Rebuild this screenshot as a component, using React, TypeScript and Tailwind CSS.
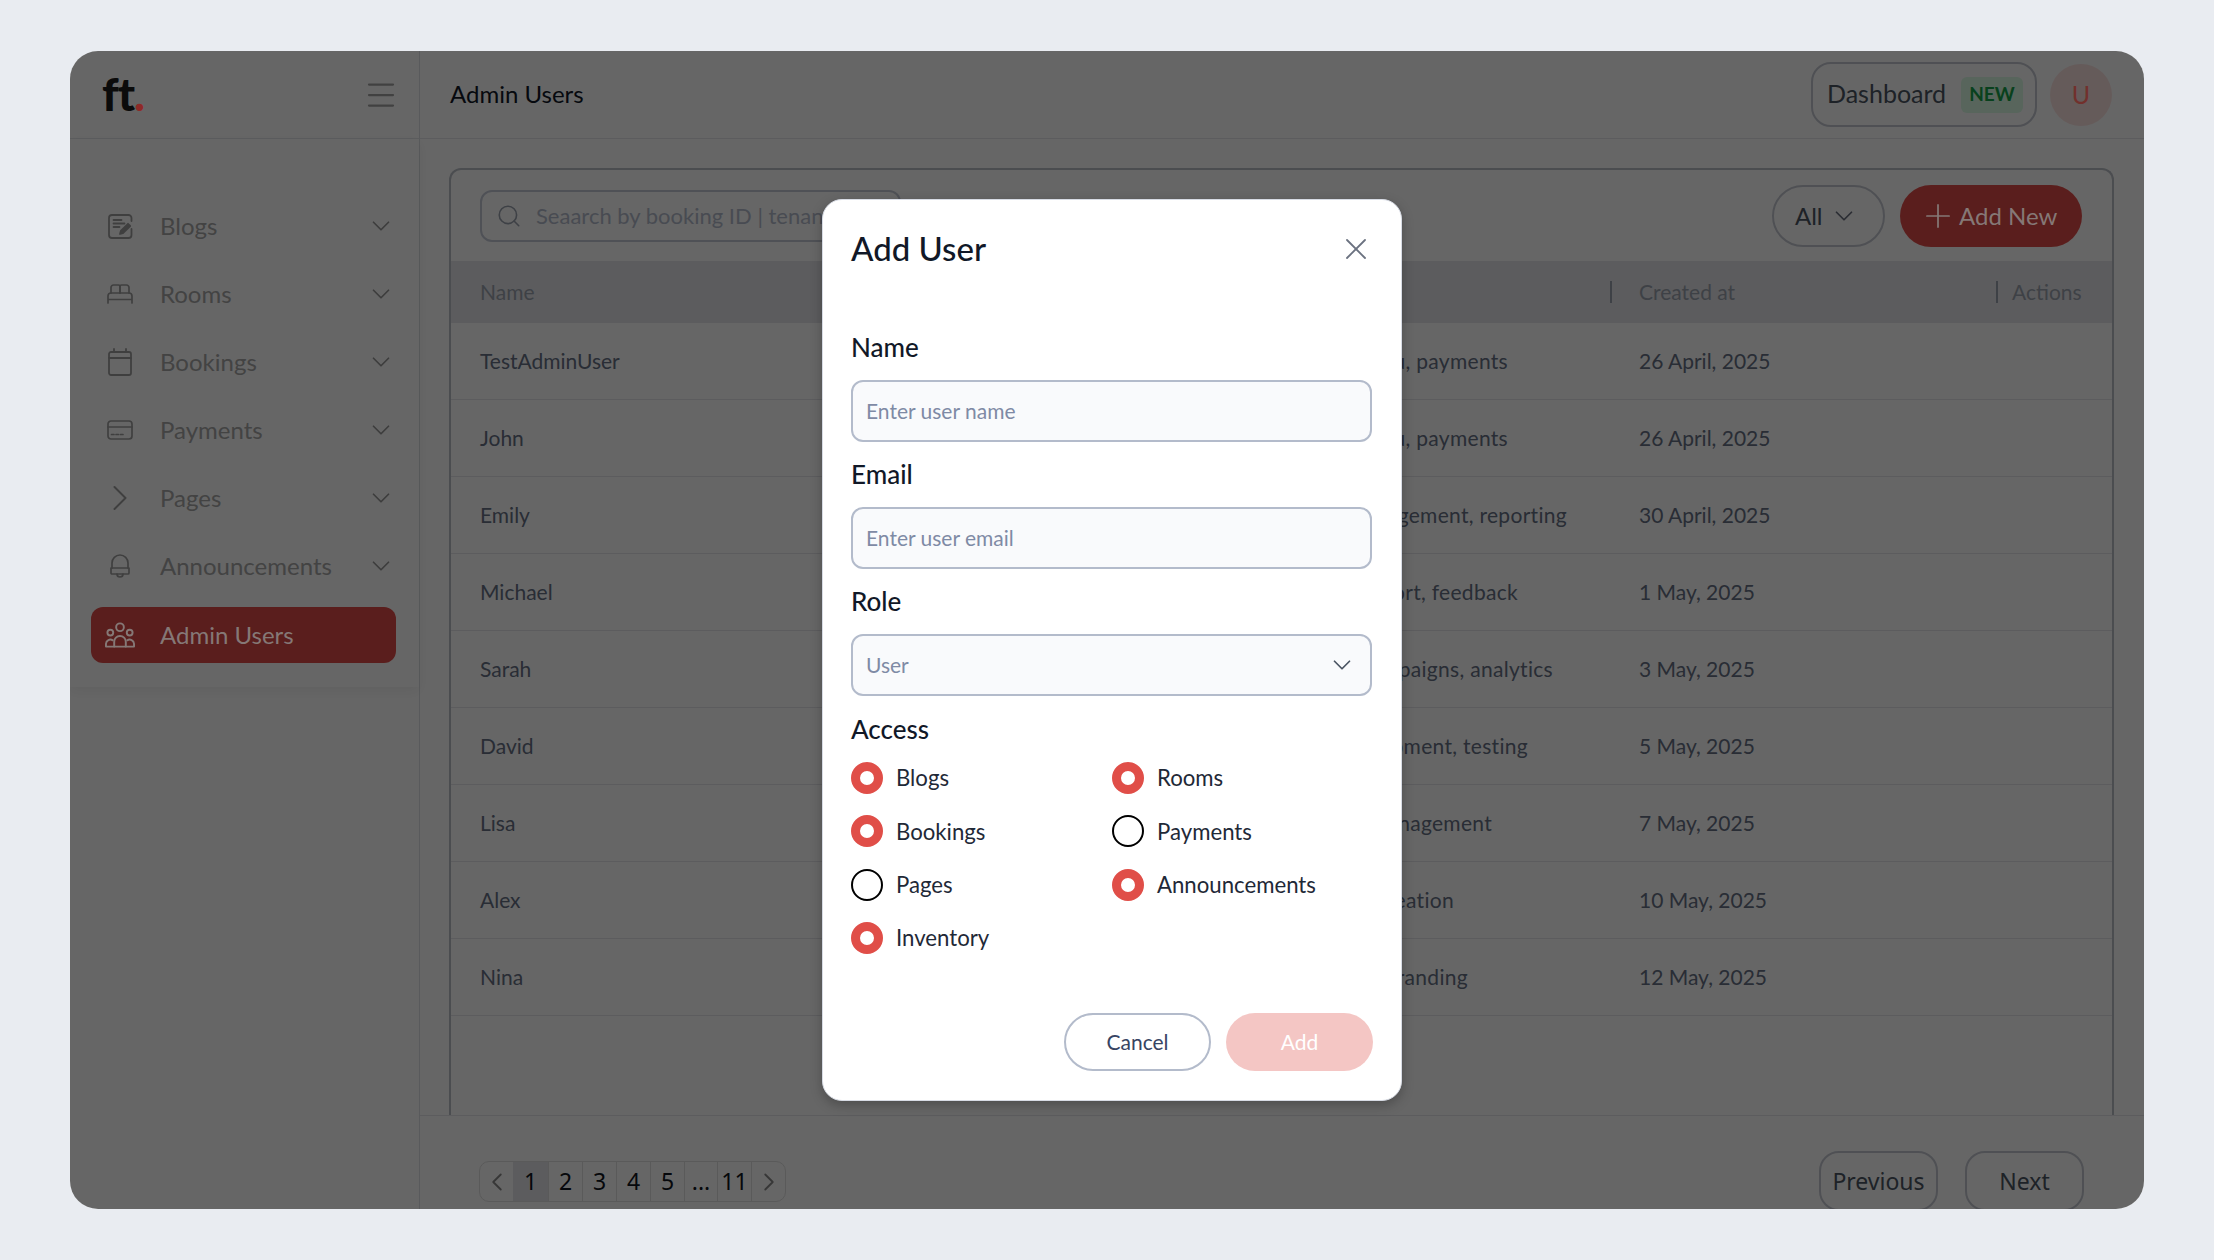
import { ChevronDown, ChevronLeft, ChevronRight, Menu, Plus, Search, X } from 'lucide-react';

const FONT = "font-['Lato','Liberation_Sans',sans-serif]";
const PAGER_FONT = "font-['Noto_Sans','Liberation_Sans',sans-serif]";

function BlogIcon() {
  return (
    <svg viewBox="0 0 25 25" className="w-[25px] h-[25px]" fill="none" stroke="currentColor" strokeWidth="1.8" strokeLinecap="round" strokeLinejoin="round">
      <path d="M23.500 7V4a3 3 0 0 0-3-3H4a3 3 0 0 0-3 3v17a3 3 0 0 0 3 3h16.500a3 3 0 0 0 3-3v-6" />
      <path d="M5.500 6h8M5.500 9.500h11M5.500 13h6" />
      <path d="M12 20l.8-3L20 9.800l2.200 2.200L15 19.200z" fill="currentColor" />
    </svg>
  );
}

function BedIcon() {
  return (
    <svg viewBox="0 0 26 20" className="w-[26px] h-[20px]" fill="none" stroke="currentColor" strokeWidth="1.7" strokeLinecap="round" strokeLinejoin="round">
      <path d="M4 9V3.500A2.500 2.500 0 0 1 6.500 1h5A1.500 1.500 0 0 1 13 2.500V9" />
      <path d="M13 9V2.500A1.500 1.500 0 0 1 14.500 1h5A2.500 2.500 0 0 1 22 3.500V9" />
      <path d="M1 19v-7a3 3 0 0 1 3-3h18a3 3 0 0 1 3 3v7M1 15.500h24" />
    </svg>
  );
}

function CalendarIcon() {
  return (
    <svg viewBox="0 0 24 28" className="w-[24px] h-[28px]" fill="none" stroke="currentColor" strokeWidth="1.8" strokeLinecap="round" strokeLinejoin="round">
      <rect x="1" y="4" width="22" height="23" rx="2" />
      <path d="M1 10h22M6 1v3M18 1v3" />
    </svg>
  );
}

function CardIcon() {
  return (
    <svg viewBox="0 0 26 20" className="w-[26px] h-[20px]" fill="none" stroke="currentColor" strokeWidth="1.7" strokeLinecap="round" strokeLinejoin="round">
      <rect x="1" y="1" width="24" height="18" rx="3" />
      <path d="M1 7h24M4.500 14.500h2.500M9 14.500h2.500M13.500 14.500h2.500" />
    </svg>
  );
}

function BellIcon() {
  return (
    <svg viewBox="0 0 22 25" className="w-[22px] h-[25px]" fill="none" stroke="currentColor" strokeWidth="1.7" strokeLinecap="round" strokeLinejoin="round">
      <path d="M3 14V9a8 8 0 0 1 16 0v5" />
      <path d="M2 14h18v5a1 1 0 0 1-1 1H3a1 1 0 0 1-1-1z" />
      <path d="M8 20a3 3 0 0 0 6 0" />
    </svg>
  );
}

function TeamIcon() {
  return (
    <svg viewBox="0 0 31 26" className="w-[31px] h-[26px]" fill="none" stroke="currentColor" strokeWidth="2" strokeLinecap="round" strokeLinejoin="round">
      <circle cx="15.500" cy="5" r="4" />
      <circle cx="5.500" cy="10.500" r="3" />
      <circle cx="25.500" cy="10.500" r="3" />
      <path d="M9.500 25v-5a6 6 0 0 1 12 0v5" />
      <path d="M1 25v-3a4.500 4.500 0 0 1 7-3.500M30 25v-3a4.500 4.500 0 0 0-7-3.500M1 25h29" />
    </svg>
  );
}

const navItems = [
  { label: 'Blogs', icon: <BlogIcon /> },
  { label: 'Rooms', icon: <BedIcon /> },
  { label: 'Bookings', icon: <CalendarIcon /> },
  { label: 'Payments', icon: <CardIcon /> },
  { label: 'Pages', icon: <ChevronRight className="w-[44px] h-[44px] shrink-0" strokeWidth={1.1} /> },
  { label: 'Announcements', icon: <BellIcon /> },
];

const rows = [
  { name: 'TestAdminUser', access: 'Blogs, menu, payments', pad: 'pr-[102px]', date: '26 April, 2025' },
  { name: 'John', access: 'Blogs, menu, payments', pad: 'pr-[102px]', date: '26 April, 2025' },
  { name: 'Emily', access: 'Content management, reporting', pad: 'pr-[43px]', date: '30 April, 2025' },
  { name: 'Michael', access: 'Customer support, feedback', pad: 'pr-[92px]', date: '1 May, 2025' },
  { name: 'Sarah', access: 'Marketing campaigns, analytics', pad: 'pr-[57px]', date: '3 May, 2025' },
  { name: 'David', access: 'Product development, testing', pad: 'pr-[82px]', date: '5 May, 2025' },
  { name: 'Lisa', access: 'Project management', pad: 'pr-[118px]', date: '7 May, 2025' },
  { name: 'Alex', access: 'Graphics, content creation', pad: 'pr-[156px]', date: '10 May, 2025' },
  { name: 'Nina', access: 'Design systems, branding', pad: 'pr-[142px]', date: '12 May, 2025' },
];

const access = [
  { label: 'Blogs', on: true },
  { label: 'Rooms', on: true },
  { label: 'Bookings', on: true },
  { label: 'Payments', on: false },
  { label: 'Pages', on: false },
  { label: 'Announcements', on: true },
  { label: 'Inventory', on: true },
];

const pages = [
  { label: '1', width: 'w-[36px] bg-[#e5e7eb]' },
  { label: '2', width: 'w-[34px]' },
  { label: '3', width: 'w-[34px]' },
  { label: '4', width: 'w-[34px]' },
  { label: '5', width: 'w-[34px]' },
  { label: '...', width: 'w-[33px]' },
  { label: '11', width: 'w-[34px]' },
];

function Sidebar() {
  return (
    <aside className="w-[350px] shrink-0 flex flex-col border-r border-[#dfe2e6]">
      <div className="h-[88px] shrink-0 flex items-center justify-between border-b border-[#e5e7eb] pl-[32px] pr-[20px]">
        <span className="text-[46px] font-black leading-none tracking-[-1px] text-[#1c1c1c] -mt-[2px]">
          ft<span className="relative z-10 text-[#8e2a28]">.</span>
        </span>
        <Menu className="w-[36px] h-[36px] text-[#a3a3a3]" strokeWidth={1.5} />
      </div>
      <nav className="flex flex-col gap-[12px] pt-[59px] pb-[24px] pl-[21px] pr-[23px] shadow-[0_4px_12px_rgba(0,0,0,0.06)]">
        {navItems.map((item) => (
          <div key={item.label} className="h-[56px] flex items-center pl-[14px] pr-0 text-[#a8a8a8]">
            <span className="w-[30px] flex justify-center text-[#9f9f9f]">{item.icon}</span>
            <span className="ml-[25px] flex-1 text-[24px]">{item.label}</span>
            <ChevronDown className="w-[30px] h-[30px] text-[#999999]" strokeWidth={1.4} />
          </div>
        ))}
        <div className="h-[56px] mt-[1px] flex items-center pl-[14px] rounded-[12px] bg-[#e14d49]">
          <span className="relative z-10 w-[30px] flex justify-center text-[#857876]"><TeamIcon /></span>
          <span className="relative z-10 ml-[25px] text-[24px] text-[#857876]">Admin Users</span>
        </div>
      </nav>
    </aside>
  );
}

function Topbar() {
  return (
    <header className="h-[88px] shrink-0 flex items-center justify-between border-b border-[#e5e7eb] pl-[30px] pr-[32px]">
      <h1 className="text-[24px] text-[#111827] -mt-[1px]">Admin Users</h1>
      <div className="flex items-center gap-[13px]">
        <div className="h-[65px] w-[226px] flex items-center justify-between rounded-[20px] border-2 border-[#c5c9d2] pl-[14px] pr-[12px]">
          <span className="text-[25px] text-[#4b5563] -mt-[1px]">Dashboard</span>
          <span className="h-[36px] w-[62px] flex items-center justify-center rounded-[6px] bg-[#dcfce7] text-[19px] font-bold text-[#16a34a]">NEW</span>
        </div>
        <div className="w-[62px] h-[62px] rounded-full bg-[#fde4e2] flex items-center justify-center text-[25px]">
          <span className="relative z-10 text-[#72302c]">U</span>
        </div>
      </div>
    </header>
  );
}

function UserTable() {
  return (
    <section className="flex-1 ml-[29px] mr-[30px] mt-[29px] border-2 border-b-0 border-[#bcc0c8] rounded-t-[12px] flex flex-col">
      <div className="h-[91px] shrink-0 flex items-center justify-between pl-[29px] pr-[30px]">
        <div className="w-[421px] h-[52px] flex items-center gap-[14px] rounded-[12px] border-2 border-[#c5cad8] pl-[14px]">
          <Search className="w-[26px] h-[26px] text-[#9ca3af]" strokeWidth={1.5} />
          <span className="text-[22px] text-[#b5bccd] whitespace-nowrap -mt-[1px]">Seaarch by booking ID | tenant</span>
        </div>
        <div className="flex items-center gap-[15px]">
          <div className="w-[113px] h-[62px] flex items-center gap-[6px] rounded-full border-2 border-[#c5c9d2] pl-[21px] text-[24px] text-[#4b5563]">
            All
            <ChevronDown className="w-[30px] h-[30px] text-[#6b7280]" strokeWidth={1.4} />
          </div>
          <div className="w-[182px] h-[62px] flex items-center gap-[2px] rounded-full bg-[#e14d49] pl-[19px]">
            <Plus className="relative z-10 w-[38px] h-[38px] text-[#857876]" strokeWidth={1.1} />
            <span className="relative z-10 text-[24px] text-[#857876]">Add New</span>
          </div>
        </div>
      </div>
      <div className="h-[62px] shrink-0 grid grid-cols-[750px_409px_386px_1fr] items-center bg-[#e5e7eb] text-[21px] text-[#9ca3af]">
        <div className="pl-[29px]">Name</div>
        <div />
        <div className="flex items-center gap-[27px]"><span className="w-[2px] h-[22px] bg-[#9ca3af]" />Created at</div>
        <div className="flex items-center gap-[14px]"><span className="w-[2px] h-[22px] bg-[#9ca3af]" />Actions</div>
      </div>
      {rows.map((row) => (
        <div key={row.name} className="h-[77px] shrink-0 grid grid-cols-[750px_409px_386px_1fr] items-center border-b border-[#e5e7eb] text-[21px] text-[#667085]">
          <div className="pl-[29px]">{row.name}</div>
          <div className={`text-right whitespace-nowrap tracking-[0.3px] ${row.pad}`}>{row.access}</div>
          <div className="pl-[29px]">{row.date}</div>
          <div />
        </div>
      ))}
    </section>
  );
}

function Pagination() {
  return (
    <div className={`flex h-[41px] mt-[45px] rounded-[10px] border border-[#e1e1e1] ${PAGER_FONT}`}>
      <div className="w-[33px] flex items-center justify-center text-[#8a8a8a]"><ChevronLeft className="w-[30px] h-[30px]" strokeWidth={1.5} /></div>
      {pages.map((page) => (
        <div key={page.label} className={`flex items-center justify-center text-[23px] text-[#0f1420] border-r border-[#e1e1e1] ${page.width}`}>
          {page.label}
        </div>
      ))}
      <div className="w-[33px] flex items-center justify-center text-[#8a8a8a]"><ChevronRight className="w-[30px] h-[30px]" strokeWidth={1.5} /></div>
    </div>
  );
}

function Field({ label, placeholder }: { label: string; placeholder: string }) {
  return (
    <div className="flex flex-col">
      <label className="h-[33px] flex items-center text-[26px] font-medium text-[#111827] mb-[16px]">{label}</label>
      <div className="h-[62px] flex items-center rounded-[12px] border-2 border-[#b3bbcb] bg-[#f9fafc] pl-[13px] text-[21px] text-[#7f8aa5]">
        {placeholder}
      </div>
    </div>
  );
}

function AddUserModal() {
  return (
    <div className={`absolute z-20 left-[752px] top-[148px] w-[580px] h-[902px] rounded-[20px] bg-white border border-[#d7dbe4] shadow-[0_4px_12px_rgba(0,0,0,0.25)] pl-[28px] pr-[29px] ${FONT}`}>
      <div className="flex items-center justify-between pt-[26px] h-[72px]">
        <h2 className="text-[33px] font-medium text-[#111827]">Add User</h2>
        <X className="w-[36px] h-[36px] text-[#6b7280] -mr-[2px]" strokeWidth={1.2} />
      </div>
      <div className="mt-[59px] flex flex-col gap-[16px]">
        <Field label="Name" placeholder="Enter user name" />
        <Field label="Email" placeholder="Enter user email" />
        <div className="flex flex-col">
          <label className="h-[33px] flex items-center text-[26px] font-medium text-[#111827] mb-[16px]">Role</label>
          <div className="h-[62px] flex items-center justify-between rounded-[12px] border-2 border-[#b3bbcb] bg-[#f9fafc] pl-[13px] pr-[13px] text-[21px] text-[#7f8aa5]">
            User
            <ChevronDown className="w-[30px] h-[30px] text-[#4b5563]" strokeWidth={1.4} />
          </div>
        </div>
      </div>
      <div className="mt-[17px] h-[33px] flex items-center text-[26px] font-medium text-[#111827]">Access</div>
      <div className="mt-[16px] grid grid-cols-[261px_1fr] gap-y-[21.3px]">
        {access.map((item) => (
          <div key={item.label} className="h-[32px] flex items-center gap-[13px] text-[22.2px] text-[#1f2937]">
            <span className={item.on ? 'w-[32px] h-[32px] rounded-full border-[9px] border-[#e04e48] bg-white' : 'w-[32px] h-[32px] rounded-full border-2 border-black bg-white'} />
            {item.label}
          </div>
        ))}
      </div>
      <div className="absolute right-[28px] bottom-[29px] flex gap-[15px]">
        <div className="w-[147px] h-[58px] rounded-full border-2 border-[#b3bbcb] flex items-center justify-center text-[21px] text-[#374463]">Cancel</div>
        <div className="w-[147px] h-[58px] rounded-full bg-[#f4c6c4] flex items-center justify-center text-[21px] text-white">Add</div>
      </div>
    </div>
  );
}

export default function App() {
  return (
    <div className={`w-full h-[1260px] bg-[#e9ecf1] pl-[70px] pt-[51px] ${FONT}`}>
      <div className="relative w-[2074px] h-[1158px] rounded-[28px] overflow-hidden bg-white flex">
        <Sidebar />
        <main className="flex-1 flex flex-col min-w-0">
          <Topbar />
          <UserTable />
          <div className="h-[94px] shrink-0 flex items-start justify-between border-t border-[#e5e7eb] pl-[59px] pr-[60px]">
            <Pagination />
            <div className={`flex gap-[27px] mt-[35px] ${PAGER_FONT}`}>
              <div className="w-[119px] h-[60px] rounded-[20px] border-2 border-[#c5c9d2] flex items-center justify-center text-[23px] text-[#4b5563]">Previous</div>
              <div className="w-[119px] h-[60px] rounded-[20px] border-2 border-[#c5c9d2] flex items-center justify-center text-[23px] text-[#4b5563]">Next</div>
            </div>
          </div>
        </main>
        <div className="absolute inset-0 bg-black/60" />
        <AddUserModal />
      </div>
    </div>
  );
}
